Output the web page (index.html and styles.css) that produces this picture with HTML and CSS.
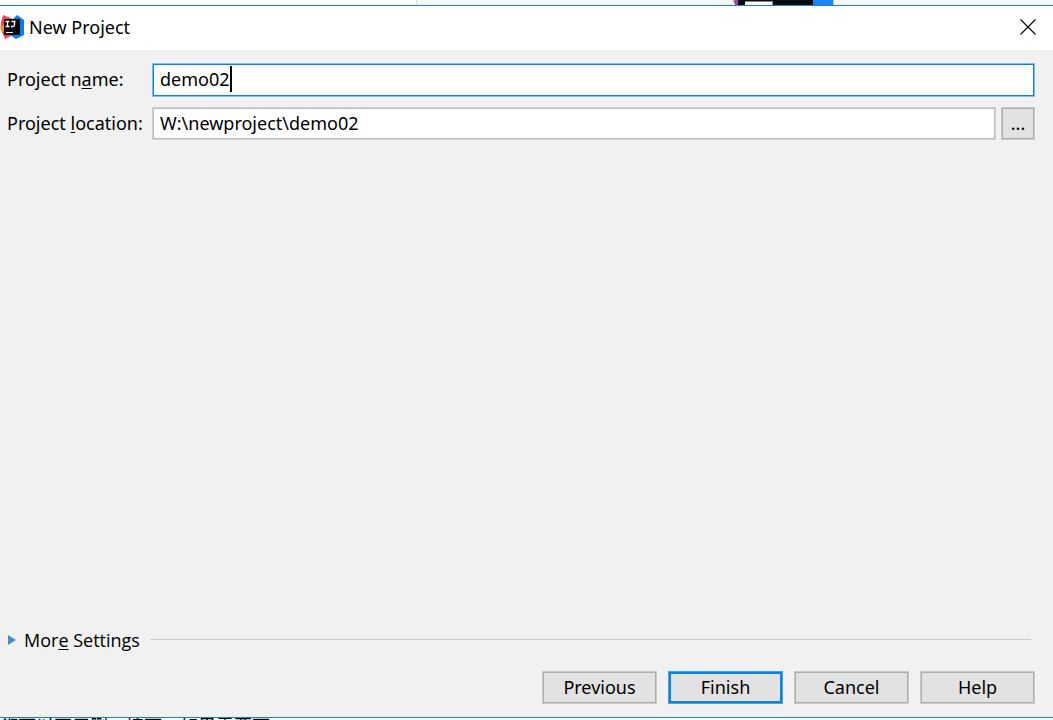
FILE: index.html
```
<!DOCTYPE html>
<html lang="en">
<head>
  <meta charset="UTF-8">
  <title>New Project</title>
  <link rel="stylesheet" href="styles.css">
</head>
<body>

  <div class="behind-top">
    <div class="behind-page"></div>
    <svg class="behind-logo" width="101" height="5" viewBox="0 0 101 5">
      <path d="M0 0h6v5H2z" fill="#9a4f9c"/>
      <path d="M0 0h2v1H0z" fill="#e59a55"/>
      <path d="M5 0h76v5H5z" fill="#0b0b0b"/>
      <path d="M12 1h28v4H12z" fill="#8c7f80"/>
      <path d="M12 2h27v3H12z" fill="#fff"/>
      <path d="M80 0h20v5H80z" fill="#1a84f2"/>
      <path d="M100 0h1v5h-1z" fill="#a5cdf8"/>
    </svg>
  </div>

  <div class="dialog">
    <header class="title-bar">
      <svg class="app-icon" width="24" height="26" viewBox="0 0 24 26">
        <path d="M3 1l10 4-3 12-9-3V8z" fill="#f8405f"/>
        <path d="M0 13l4-3 3 8-5 1z" fill="#fb8a2c"/>
        <path d="M2 18l10-2 1 5-8 4z" fill="#f23c72"/>
        <path d="M13 5l4-4 7 5v15l-8 4-6-4z" fill="#087cf0"/>
        <path d="M4 5h16v16H4z" fill="#080808"/>
        <path d="M5.500 7.500h4M7.500 7v6M5.500 12.500h4M11.500 7.500h4M14.500 7v4q0 1.500-1.500 1.500h-2" fill="none" stroke="#fff" stroke-width="1.300"/>
        <path d="M6 18h7v1H6z" fill="#fff"/>
      </svg>
      <h1>New Project</h1>
      <button class="close-button" aria-label="Close">
        <svg width="16" height="16" viewBox="0 0 16 16">
          <path d="M.5 .5l15 15M15.500 .5l-15 15" fill="none" stroke="#000" stroke-width="1.100"/>
        </svg>
      </button>
    </header>

    <form class="content" onsubmit="return false">
      <div class="field">
        <label for="projectName">Project n<u>a</u>me:</label>
        <div class="input-wrap">
          <input type="text" id="projectName" class="active" value="demo02">
          <span class="caret"></span>
        </div>
      </div>
      <div class="field">
        <label for="projectLocation">Project <u>l</u>ocation:</label>
        <div class="input-wrap">
          <input type="text" id="projectLocation" value="W:\newproject\demo02">
        </div>
        <button type="button" class="browse">...</button>
      </div>

      <div class="more">
        <button type="button" class="more-toggle">
          <svg width="8" height="12" viewBox="0 0 8 12"><path d="M0 1l8 5-8 5z" fill="#4393c3"/></svg>
          <span>Mor<u>e</u> Settings</span>
        </button>
        <div class="line"></div>
      </div>

      <div class="buttons">
        <button type="button">Previous</button>
        <button type="submit" class="primary">Finish</button>
        <button type="button">Cancel</button>
        <button type="button">Help</button>
      </div>
    </form>
  </div>

  <div class="behind-bottom" lang="zh">都可以不用删，接下，如果需要下</div>

</body>
</html>
```
FILE: styles.css
```
* {
  box-sizing: border-box;
}
body {
  margin: 0;
  height: 100vh;
  display: flex;
  flex-direction: column;
  overflow: hidden;
  background: #f6f6f6;
  color: #000;
  font-family: "Noto Sans", "Noto Sans CJK SC", sans-serif;
  font-size: 18px;
}
button, input {
  font: inherit;
  color: inherit;
}
u {
  text-underline-offset: 2px;
  text-decoration-thickness: 1px;
  text-decoration-skip-ink: none;
}

/* window behind the dialog */
.behind-top {
  display: flex;
  height: 5px;
}
.behind-page {
  width: 417px;
  background: #fff;
  border-right: 1px solid #ddd;
}
.behind-logo {
  margin-left: 316px;
}
.behind-bottom {
  height: 2px;
  overflow: hidden;
  background: #fff;
  font-family: "Noto Sans CJK SC", sans-serif;
  line-height: 14px;
}

.dialog {
  flex: 1;
  display: flex;
  flex-direction: column;
  background: #f1f1f1;
  border-top: 1px solid #1c7fd0;
  border-bottom: 1px solid #1c7fd0;
}
.title-bar {
  display: flex;
  align-items: center;
  height: 44px;
  padding: 0 17px 2px 0;
  background: #fff;
}
h1 {
  flex: 1;
  margin: 0 0 0 5px;
  font-size: 18px;
  font-weight: normal;
}
.close-button {
  display: flex;
  padding: 0;
  background: none;
  border: none;
}

.content {
  flex: 1;
  display: flex;
  flex-direction: column;
  padding: 13px 18px 13px 7px;
}
.field {
  display: flex;
  align-items: center;
  margin-bottom: 10px;
}
.field label {
  width: 145px;
  padding-bottom: 2px;
  white-space: nowrap;
}
.input-wrap {
  position: relative;
  flex: 1;
}
input {
  display: block;
  width: 100%;
  height: 33px;
  padding: 0 7px 2px;
  background: #fff;
  border: 1px solid #d2d2d2;
  box-shadow: inset 0 0 0 1px #b9b9b9;
  outline: none;
}
input.active {
  height: 34px;
  border-color: #7dbcec;
  box-shadow: inset 0 0 0 1px #0a84de;
}
.caret {
  position: absolute;
  left: 78px;
  top: 3px;
  width: 2px;
  height: 26px;
  background: #000;
}
.browse, .buttons button {
  height: 33px;
  padding: 0 0 2px;
  background: #e2e2e2;
  border: 1px solid #c9c9c9;
  box-shadow: inset 0 0 0 1px #adadad;
}
.browse {
  width: 34px;
  margin-left: 5px;
}

.more {
  display: flex;
  align-items: center;
  margin-top: auto;
  padding-right: 4px;
}
.more-toggle {
  display: flex;
  align-items: center;
  gap: 8px;
  padding: 2px 10px 0 1px;
  background: none;
  border: none;
  font-family: "Open Sans", sans-serif;
}
.line {
  flex: 1;
  height: 1px;
  background: #cbcbcb;
}
.buttons {
  display: flex;
  justify-content: flex-end;
  gap: 11px;
  margin-top: 19px;
}
.buttons button {
  width: 115px;
}
.buttons .primary {
  border-color: #4aa3e5;
  box-shadow: inset 0 0 0 2px #0a84de;
}
```
